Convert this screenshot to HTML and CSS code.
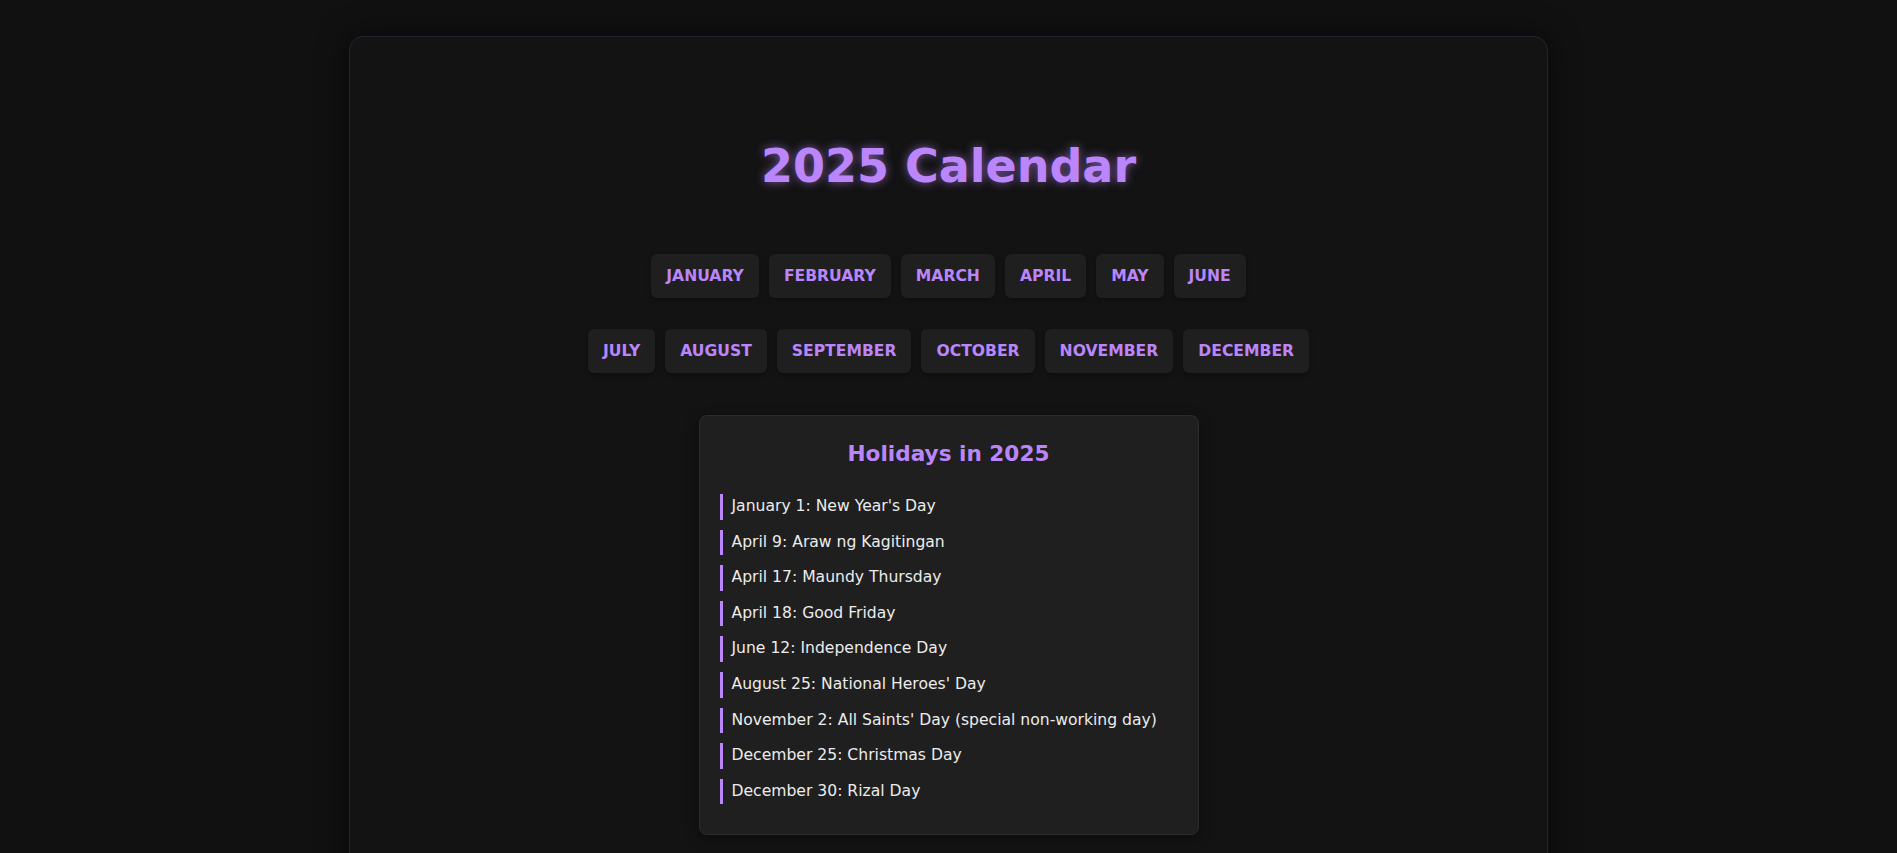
FILE: index.html
```html
<!DOCTYPE html>
<html lang="en">
<head>
<meta charset="utf-8">
<title>2025 Calendar</title>
<link rel="stylesheet" href="styles.css">
</head>
<body>
<div class="container">
  <h1 class="title">2025 Calendar</h1>
  <div class="months">
    <div class="month-row">
      <button class="month-btn">January</button>
      <button class="month-btn">February</button>
      <button class="month-btn">March</button>
      <button class="month-btn">April</button>
      <button class="month-btn">May</button>
      <button class="month-btn">June</button>
    </div>
    <div class="month-row">
      <button class="month-btn">July</button>
      <button class="month-btn">August</button>
      <button class="month-btn">September</button>
      <button class="month-btn">October</button>
      <button class="month-btn">November</button>
      <button class="month-btn">December</button>
    </div>
  </div>
  <div class="holidays">
    <h2 class="holidays-title">Holidays in 2025</h2>
    <ul class="holiday-list">
      <li class="holiday">January 1: New Year's Day</li>
      <li class="holiday">April 9: Araw ng Kagitingan</li>
      <li class="holiday">April 17: Maundy Thursday</li>
      <li class="holiday">April 18: Good Friday</li>
      <li class="holiday">June 12: Independence Day</li>
      <li class="holiday">August 25: National Heroes' Day</li>
      <li class="holiday">November 2: All Saints' Day (special non-working day)</li>
      <li class="holiday">December 25: Christmas Day</li>
      <li class="holiday">December 30: Rizal Day</li>
    </ul>
  </div>
</div>
</body>
</html>
```
FILE: styles.css
```css
* {
  box-sizing: border-box;
}

html, body {
  margin: 0;
  background: #111111;
}

body {
  padding: 36px 20px 40px;
  font-family: "DejaVu Sans", "Noto Sans", sans-serif;
  color: #e0e0e0;
}

.container {
  max-width: 1199px;
  margin: 0 auto;
  background: #131313;
  border: 1px solid rgba(187, 134, 252, 0.13);
  border-radius: 15px;
  box-shadow: 0 0 30px rgba(0, 0, 0, 0.6);
  padding: 40px 20px 60px;
  display: flex;
  flex-direction: column;
  align-items: center;
}

.title {
  margin: 60px 0 59px;
  font-size: 46px;
  line-height: 58px;
  font-weight: 700;
  color: #bb86fc;
  text-shadow: 0 0 10px rgba(187, 134, 252, 0.6);
}

.months {
  display: flex;
  flex-direction: column;
  align-items: center;
  gap: 31px;
}

.month-row {
  display: flex;
  justify-content: center;
  gap: 10px;
}

.month-btn {
  font-family: "DejaVu Sans", "Noto Sans", sans-serif;
  font-size: 15.6px;
  line-height: 20px;
  font-weight: 700;
  text-transform: uppercase;
  color: #bb86fc;
  background: #1f1f1f;
  border: none;
  border-radius: 6px;
  padding: 12px 15px;
  box-shadow: 0 2px 5px rgba(0, 0, 0, 0.3);
  cursor: pointer;
}

.holidays {
  margin-top: 42px;
  width: 500px;
  background: #1f1f1f;
  border: 1px solid #2b2a31;
  border-radius: 8px;
  padding: 20px 20px 20px;
  box-shadow: 0 4px 14px rgba(0, 0, 0, 0.4);
}

.holidays-title {
  margin: 4px 0 26px;
  text-align: center;
  font-size: 21.6px;
  line-height: 28px;
  font-weight: 700;
  color: #bb86fc;
}

.holiday-list {
  list-style: none;
  margin: 0;
  padding: 0;
}

.holiday {
  border-left: 3px solid #bb86fc;
  padding-left: 9px;
  margin-bottom: 10px;
  font-size: 15.6px;
  line-height: 25.6px;
  color: #ececec;
}
```
